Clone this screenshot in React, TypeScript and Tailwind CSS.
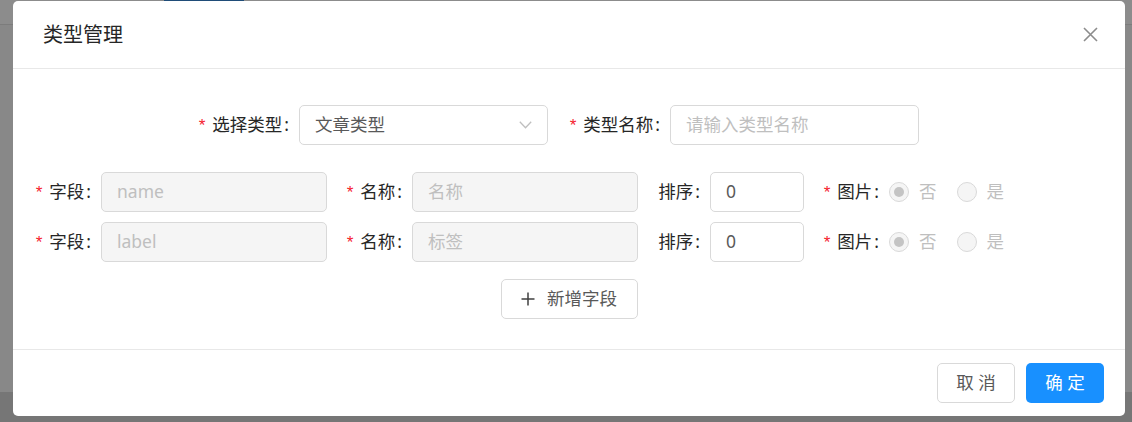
import React from "react";

// 一个表单标签：红色星号 + 文字 + 冒号，右对齐贴着后面的控件
function FieldLabel({
  text,
  required,
  className,
}: {
  text: string;
  required?: boolean;
  className: string;
}) {
  return (
    <div className={"flex shrink-0 items-center justify-end whitespace-nowrap " + className}>
      {required && (
        <span className="mr-[5px] translate-y-[1px] font-['Liberation_Mono',monospace] text-[17px] leading-none text-[#f5222d]">
          *
        </span>
      )}
      <span className="text-[17.5px] leading-none text-[#262626]">{text}</span>
      <span className="ml-[2px] mr-[10px] text-[17.5px] leading-none text-[#262626]">:</span>
    </div>
  );
}

function Input({
  value,
  placeholder,
  disabled,
  className,
}: {
  value?: string;
  placeholder?: string;
  disabled?: boolean;
  className: string;
}) {
  return (
    <div
      className={
        "flex h-[40px] shrink-0 items-center rounded-[5px] border border-[#d9d9d9] pl-[15px] text-[17.5px] leading-none " +
        (disabled ? "bg-[#f5f5f5] " : "bg-white ") +
        className
      }
    >
      {value ? (
        <span className={disabled ? "text-[#bfbfbf]" : "text-[#595959]"}>{value}</span>
      ) : (
        <span className="text-[#bfbfbf]">{placeholder}</span>
      )}
    </div>
  );
}

function Radio({ text, checked }: { text: string; checked?: boolean }) {
  return (
    <div className="mr-[10px] flex items-center">
      <span className="flex h-[20px] w-[20px] items-center justify-center rounded-full border border-[#d9d9d9] bg-[#f5f5f5]">
        {checked && <span className="h-[10px] w-[10px] rounded-full bg-[#c4c4c4]" />}
      </span>
      <span className="px-[10px] text-[17.5px] leading-none text-[#bfbfbf]">{text}</span>
    </div>
  );
}

// 字段行
function FieldRow({ field, name }: { field: string; name: string }) {
  return (
    <div className="flex items-center">
      <FieldLabel text="字段" required className="w-[88px]" />
      <Input placeholder={field} disabled className="w-[226px]" />
      <FieldLabel text="名称" required className="w-[85px]" />
      <Input placeholder={name} disabled className="w-[226px]" />
      <FieldLabel text="排序" className="w-[72px]" />
      <Input value="0" className="w-[94px]" />
      <FieldLabel text="图片" required className="w-[85px]" />
      <Radio text="否" checked />
      <Radio text="是" />
    </div>
  );
}

export default function App() {
  return (
    <div className="relative h-[422px] w-[1132px] overflow-hidden bg-[#888888] font-['Noto_Sans','Noto_Sans_CJK_SC',sans-serif]">
      {/* 遮罩下面的页面 */}
      <div className="h-[25px] border-b border-[#7c7c7c] bg-[#8c8c8c]" />
      <div className="absolute left-[164px] top-0 h-[1px] w-[80px] bg-[#1f4c78]" />
      <div className="absolute bottom-0 left-0 h-[30px] w-full bg-[#767676]" />

      {/* 弹窗 */}
      <div className="absolute left-[13px] top-[1px] flex w-[1112px] flex-col rounded-[5px] bg-white">
        {/* 标题 */}
        <div className="flex h-[68px] items-center justify-between border-b border-[#e8e8e8] pl-[30px] pr-[27px]">
          <span className="text-[20px] leading-none text-[#262626]">类型管理</span>
          <svg width="15" height="15" viewBox="0 0 15 15" fill="none">
            <path d="M1 1L14 14M14 1L1 14" stroke="#8c8c8c" strokeWidth="1.6" />
          </svg>
        </div>

        {/* 表单 */}
        <div className="flex flex-col pb-[30px] pt-[36px]">
          <div className="flex items-center pl-[166px]">
            <FieldLabel text="选择类型" required className="w-[120px]" />
            <div className="flex h-[40px] w-[249px] items-center justify-between rounded-[5px] border border-[#d9d9d9] pl-[15px] pr-[15px]">
              <span className="text-[17.5px] leading-none text-[#595959]">文章类型</span>
              <svg width="13" height="8" viewBox="0 0 13 8" fill="none">
                <path d="M0.8 0.8L6.5 6.8L12.2 0.8" stroke="#bfbfbf" strokeWidth="1.3" />
              </svg>
            </div>
            <FieldLabel text="类型名称" required className="w-[122px]" />
            <Input placeholder="请输入类型名称" className="w-[249px]" />
          </div>

          <div className="mt-[27px] flex flex-col gap-[10px]">
            <FieldRow field="name" name="名称" />
            <FieldRow field="label" name="标签" />
          </div>

          <div className="mt-[17px] flex justify-center">
            <div className="flex h-[40px] w-[137px] items-center justify-center gap-[12px] rounded-[5px] border border-[#d9d9d9] bg-white">
              <svg width="14" height="14" viewBox="0 0 14 14" fill="none">
                <path d="M7 0.5V13.5M0.5 7H13.5" stroke="#404040" strokeWidth="1.5" />
              </svg>
              <span className="text-[17.5px] leading-none text-[#595959]">新增字段</span>
            </div>
          </div>
        </div>

        {/* 底部按钮 */}
        <div className="flex justify-end gap-[11px] border-t border-[#e8e8e8] pb-[13px] pl-[21px] pr-[21px] pt-[13px]">
          <div className="flex h-[40px] w-[78px] items-center justify-center rounded-[5px] border border-[#d9d9d9] bg-white text-[17.5px] leading-none text-[#595959]">
            取 消
          </div>
          <div className="flex h-[40px] w-[78px] items-center justify-center rounded-[5px] bg-[#1890ff] text-[17.5px] leading-none text-white">
            确 定
          </div>
        </div>
      </div>
    </div>
  );
}
